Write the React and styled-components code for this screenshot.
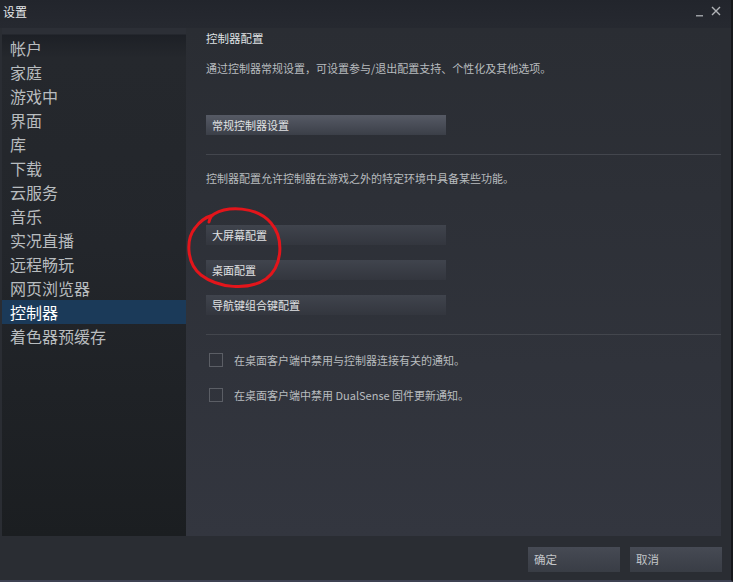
import styled, { createGlobalStyle } from 'styled-components'

const GlobalStyle = createGlobalStyle`
  html, body {
    margin: 0;
    padding: 0;
    background: #1b1d21;
  }
  body {
    font-family: "Noto Sans CJK SC", "Noto Sans", "Liberation Sans", sans-serif;
  }
`

const Window = styled.div`
  width: 733px;
  height: 582px;
  display: flex;
  flex-direction: column;
  background: #2a2d33;
  box-sizing: border-box;
  border-right: 2px solid #16181b;
  border-bottom: 2px solid #3e4152;
`

const TitleBar = styled.div`
  height: 28px;
  flex: none;
  display: flex;
  align-items: flex-start;
  justify-content: space-between;
  background: linear-gradient(#22252c, #262930);
`

const Title = styled.span`
  color: #e6e8ea;
  font-size: 12px;
  line-height: 14px;
  margin: 5px 0 0 3px;
`

const WindowControls = styled.div`
  display: flex;
  align-items: flex-start;
  gap: 7px;
  margin: 6px 10px 0 0;
`

const Body = styled.div`
  flex: 1;
  display: flex;
  min-height: 0;
  padding: 0 10px 0 2px;
`

const Sidebar = styled.nav`
  width: 184px;
  flex: none;
  padding-top: 8px;
  box-sizing: border-box;
  background: linear-gradient(
    #2c2f36 0px,
    #2c2f36 6px,
    #1d2026 7px,
    #25282d 30px,
    #23262b 220px,
    #1b1e21 100%
  );
`

const NavItem = styled.div`
  height: 24px;
  line-height: 24px;
  padding-left: 8px;
  font-size: 16px;
  color: ${(p) => (p.$active ? '#ffffff' : '#b8bcbf')};
  background: ${(p) => (p.$active ? '#1b3a59' : 'transparent')};
`

const Content = styled.main`
  position: relative;
  flex: 1;
  padding-left: 20px;
  background: linear-gradient(#2a2d33, #33363f);
`

const Heading = styled.div`
  margin-top: 2px;
  font-size: 11.5px;
  line-height: 16px;
  color: #dfe1e3;
`

const Desc = styled.div`
  margin-top: ${(p) => p.$top}px;
  font-size: 11px;
  line-height: 16px;
  color: #b8bcbf;
`

const ConfigButton = styled.div`
  width: 240px;
  height: 20px;
  line-height: 20px;
  box-sizing: border-box;
  padding-left: 6px;
  margin-top: ${(p) => p.$top}px;
  font-size: 11px;
  color: #e0e2e4;
  background: ${(p) =>
    p.$lit
      ? 'linear-gradient(#565a65, #3b3f48)'
      : 'linear-gradient(#40444d, #33363e)'};
`

const Divider = styled.div`
  height: 1px;
  margin-top: ${(p) => p.$top}px;
  background: #43464d;
`

const CheckRow = styled.label`
  display: flex;
  align-items: center;
  gap: 11px;
  height: 16px;
  margin-top: ${(p) => p.$top}px;
  padding-left: 3px;
  font-size: 11px;
  color: #b8bcbf;
`

const Box = styled.span`
  width: 14px;
  height: 14px;
  box-sizing: border-box;
  border: 1px solid #5b5e65;
  flex: none;
`

const Scribble = styled.svg`
  position: absolute;
  left: 0;
  top: 0;
  pointer-events: none;
`

const Footer = styled.footer`
  height: 44px;
  flex: none;
  display: flex;
  justify-content: flex-end;
  align-items: flex-start;
  gap: 10px;
  padding: 11px 9px 0 0;
  box-sizing: border-box;
  background: #2a2d33;
`

const DialogButton = styled.div`
  width: 92px;
  height: 25px;
  line-height: 25px;
  padding-left: 6px;
  box-sizing: border-box;
  font-size: 11.5px;
  color: #c3c6c9;
  background: linear-gradient(#464a54, #393d45);
`

const navItems = [
  '帐户', '家庭', '游戏中', '界面', '库', '下载', '云服务', '音乐',
  '实况直播', '远程畅玩', '网页浏览器', '控制器', '着色器预缓存',
]

export default function App() {
  return (
    <>
      <GlobalStyle />
      <Window>
        <TitleBar>
          <Title>设置</Title>
          <WindowControls>
            <svg width="8" height="12" viewBox="0 0 8 12">
              <rect x="0" y="9" width="7" height="1.5" fill="#9a9da2" />
            </svg>
            <svg width="10" height="10" viewBox="0 0 10 10">
              <path d="M1 1 L9 9 M9 1 L1 9" stroke="#b0b3b7" strokeWidth="1.4" />
            </svg>
          </WindowControls>
        </TitleBar>
        <Body>
          <Sidebar>
            {navItems.map((item) => (
              <NavItem key={item} $active={item === '控制器'}>{item}</NavItem>
            ))}
          </Sidebar>
          <Content>
            <Heading>控制器配置</Heading>
            <Desc $top={14}>通过控制器常规设置，可设置参与/退出配置支持、个性化及其他选项。</Desc>
            <ConfigButton $top={39} $lit>常规控制器设置</ConfigButton>
            <Divider $top={19} />
            <Desc $top={15}>控制器配置允许控制器在游戏之外的特定环境中具备某些功能。</Desc>
            <ConfigButton $top={39}>大屏幕配置</ConfigButton>
            <ConfigButton $top={15}>桌面配置</ConfigButton>
            <ConfigButton $top={15}>导航键组合键配置</ConfigButton>
            <Divider $top={19} />
            <CheckRow $top={17}>
              <Box />
              在桌面客户端中禁用与控制器连接有关的通知。
            </CheckRow>
            <CheckRow $top={19}>
              <Box />
              在桌面客户端中禁用 DualSense 固件更新通知。
            </CheckRow>
            <Scribble width="120" height="280" viewBox="0 0 120 280">
              <path
                d="M23 194 C24 190 26 187 28 186 C42 178 70 178 85 195 C98 210 97 238 80 251 C62 263 32 260 15 247 C0 235 0 211 9 200 C14 193 20 189 27 187"
                fill="none"
                stroke="#e3151b"
                strokeWidth="3"
                strokeLinecap="round"
              />
            </Scribble>
          </Content>
        </Body>
        <Footer>
          <DialogButton>确定</DialogButton>
          <DialogButton>取消</DialogButton>
        </Footer>
      </Window>
    </>
  )
}
